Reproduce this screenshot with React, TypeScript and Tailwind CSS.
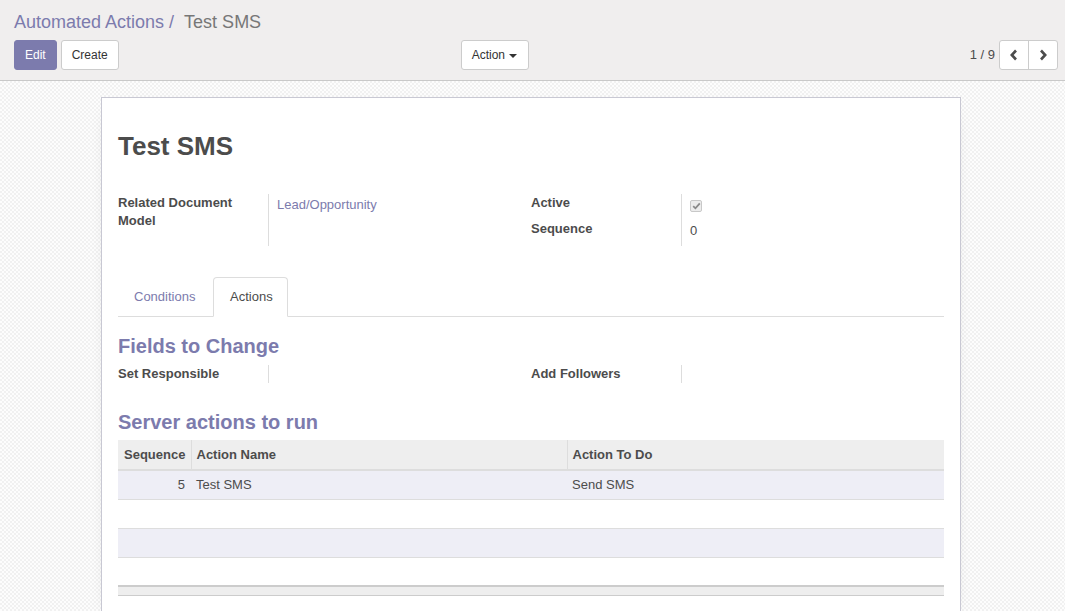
import React from "react";

const purple = "text-[#7c7bad]";

function Chevron({ dir }: { dir: "left" | "right" }) {
  return (
    <svg width="10" height="12" viewBox="0 0 10 12" fill="none">
      {dir === "left" ? (
        <path d="M7 1.5 L2.8 6 L7 10.5" stroke="#4c4c4c" strokeWidth="2.6" strokeLinejoin="miter" />
      ) : (
        <path d="M3 1.5 L7.2 6 L3 10.5" stroke="#4c4c4c" strokeWidth="2.6" strokeLinejoin="miter" />
      )}
    </svg>
  );
}

function CheckBox() {
  return (
    <span className="inline-flex h-[12px] w-[12px] items-center justify-center rounded-[2px] border border-[#c8c8c8] bg-[#ececec]">
      <svg width="9" height="8" viewBox="0 0 9 8">
        <path d="M1.2 4.2 L3.4 6.3 L7.8 1.4" stroke="#8a8a8a" strokeWidth="1.8" fill="none" />
      </svg>
    </span>
  );
}

export default function App() {
  return (
    <div
      className="min-h-[611px] w-[1065px] overflow-hidden text-[13px] text-[#4c4c4c]"
      style={{ fontFamily: '"Liberation Sans", Arial, sans-serif' }}
    >
      {/* Control panel */}
      <div className="h-[81px] border-b border-[#c9c9c9] bg-[#f0eeee] pl-[14px] pr-[7px] pt-[9px]">
        <div className="flex h-[26px] items-center text-[18px] leading-[26px]">
          <span className={purple}>Automated Actions</span>
          <span className={`${purple} ml-[5px]`}>/</span>
          <span className="ml-[10px] text-[#777777]">Test SMS</span>
        </div>
        <div className="mt-[5px] flex h-[30px] items-center">
          <div className="flex w-[515px] items-center">
            <button className="h-[30px] rounded-[3px] border border-[#7c7bad] bg-[#7c7bad] px-[10px] text-[12px] text-white">
              Edit
            </button>
            <button className="ml-[4px] h-[30px] rounded-[3px] border border-[#cccccc] bg-white px-[10px] text-[12px] text-[#333]">
              Create
            </button>
            <button className="ml-auto flex h-[30px] items-center rounded-[3px] border border-[#cccccc] bg-white pl-[10px] pr-[11px] text-[12px] text-[#333]">
              Action
              <span className="ml-[4px] mt-[1px] h-0 w-0 border-x-[4px] border-t-[4px] border-x-transparent border-t-[#333]" />
            </button>
          </div>
          <div className="ml-auto flex items-center">
            <span className="mr-[4px] text-[13px] text-[#4c4c4c]">1 / 9</span>
            <div className="flex h-[30px] overflow-hidden rounded-[3px] border border-[#cccccc] bg-white">
              <button className="flex w-[29px] items-center justify-center border-r border-[#cccccc]">
                <Chevron dir="left" />
              </button>
              <button className="flex w-[28px] items-center justify-center">
                <Chevron dir="right" />
              </button>
            </div>
          </div>
        </div>
      </div>

      {/* Background area */}
      <div className="h-[530px] bg-[repeating-conic-gradient(#f1f1f1_0%_25%,#fdfdfd_0%_50%)] bg-[length:4px_4px] pt-[16px]">
        <div className="ml-[101px] min-h-[520px] w-[860px] border border-[#c8c8d3] bg-white px-[16px] pt-[31px] shadow-[0_5px_20px_-15px_rgba(0,0,0,0.4)]">
          <h1 className="h-[34px] text-[26px] font-bold leading-[34px] text-[#4c4c4c]">Test SMS</h1>

          {/* Main groups */}
          <div className="mt-[31px] flex">
            <div className="flex w-[413px]">
              <div className="w-[151px] border-r border-[#dddddd] pb-[4px] font-bold leading-[18px]">
                Related Document
                <br />
                Model
              </div>
              <div className={`pl-[8px] pt-[2px] leading-[18px] ${purple}`}>Lead/Opportunity</div>
            </div>
            <div className="flex w-[413px]">
              <div className="w-[151px] border-r border-[#dddddd] font-bold leading-[18px]">
                <div className="h-[26px]">Active</div>
                <div className="h-[26px]">Sequence</div>
              </div>
              <div className="pl-[8px] leading-[18px]">
                <div className="flex h-[26px] items-start pt-[6px]">
                  <CheckBox />
                </div>
                <div className="h-[26px] pt-[2px]">0</div>
              </div>
            </div>
          </div>

          {/* Tabs */}
          <div className="mt-[31px] flex h-[40px] border-b border-[#dddddd]">
            <div className={`flex h-[40px] w-[95px] items-center pl-[16px] ${purple}`}>Conditions</div>
            <div className="mb-[-1px] flex h-[40px] w-[75px] items-center rounded-t-[4px] border border-b-white border-[#dddddd] bg-white pl-[16px] text-[#4c4c4c]">
              Actions
            </div>
          </div>

          <h2 className={`mt-[16px] h-[26px] text-[20px] font-bold leading-[26px] ${purple}`}>Fields to Change</h2>
          <div className="mt-[6px] flex">
            <div className="flex w-[413px]">
              <div className="h-[18px] w-[151px] border-r border-[#dddddd] font-bold leading-[18px]">Set Responsible</div>
            </div>
            <div className="flex w-[413px]">
              <div className="h-[18px] w-[151px] border-r border-[#dddddd] font-bold leading-[18px]">Add Followers</div>
            </div>
          </div>

          <h2 className={`mt-[26px] h-[26px] text-[20px] font-bold leading-[26px] ${purple}`}>Server actions to run</h2>

          <table className="mt-[5px] w-[826px] table-fixed border-collapse text-[13px]">
            <colgroup>
              <col className="w-[73px]" />
              <col className="w-[376px]" />
              <col className="w-[377px]" />
            </colgroup>
            <thead>
              <tr className="h-[30px] border-b-2 border-[#dddddd] bg-[#eeeeee] font-bold">
                <th className="px-[6px] text-left">Sequence</th>
                <th className="border-l border-[#dddddd] px-[5px] text-left">Action Name</th>
                <th className="border-l border-[#dddddd] px-[5px] text-left">Action To Do</th>
              </tr>
            </thead>
            <tbody>
              <tr className="h-[29px] border-b border-[#dddddd] bg-[#eeeef6]">
                <td className="px-[6px] text-right">5</td>
                <td className="px-[5px]">Test SMS</td>
                <td className="px-[5px]">Send SMS</td>
              </tr>
              <tr className="h-[29px] border-b border-[#dddddd] bg-white">
                <td colSpan={3}></td>
              </tr>
              <tr className="h-[29px] border-b border-[#dddddd] bg-[#eeeef6]">
                <td colSpan={3}></td>
              </tr>
              <tr className="h-[29px] bg-white">
                <td colSpan={3}></td>
              </tr>
            </tbody>
            <tfoot>
              <tr className="h-[9px] border-t-2 border-b border-t-[#cccccc] border-b-[#cccccc] bg-[#eeeeee]">
                <td colSpan={3}></td>
              </tr>
            </tfoot>
          </table>
        </div>
      </div>
    </div>
  );
}
